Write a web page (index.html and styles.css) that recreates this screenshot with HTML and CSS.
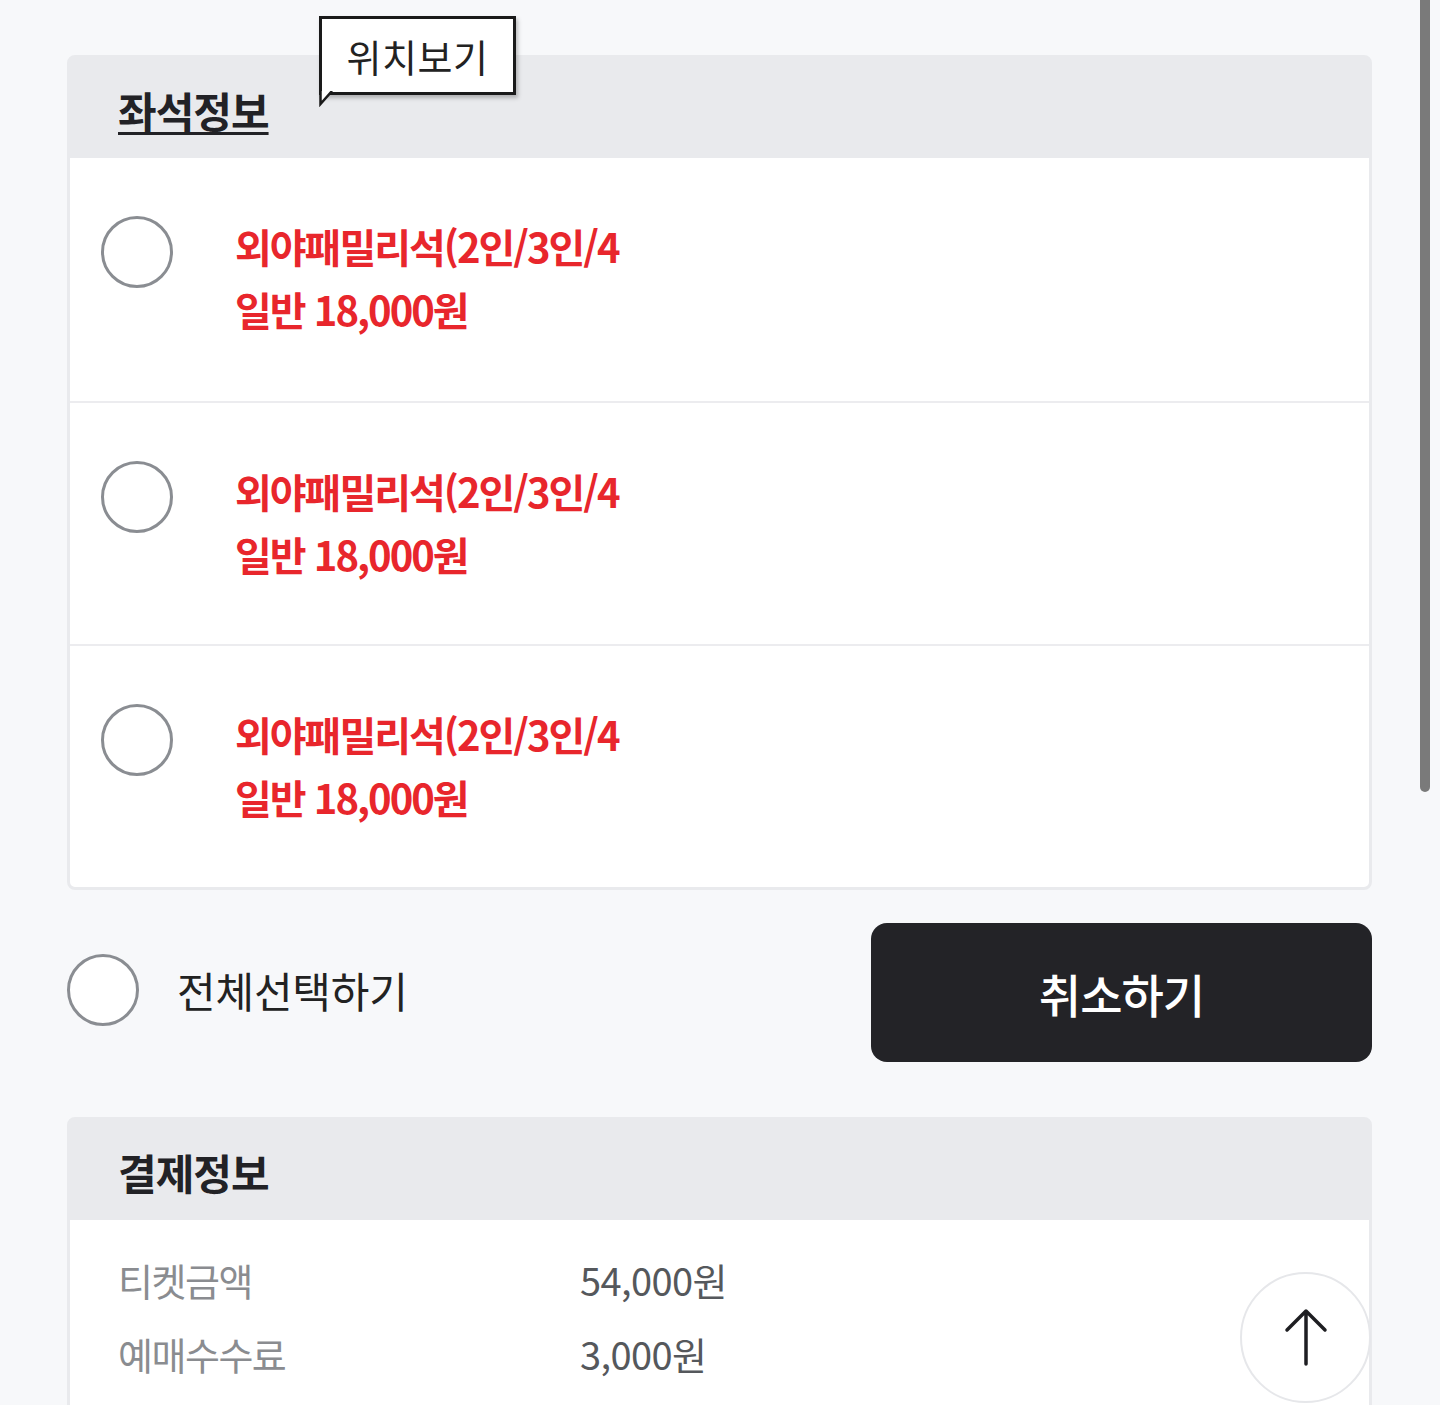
FILE: index.html
```html
<!DOCTYPE html>
<html lang="ko">
<head>
<meta charset="utf-8">
<title>좌석정보</title>
<link rel="stylesheet" href="styles.css">
</head>
<body>
<div class="page">
  <section class="card seat-card">
    <header class="card-head">
      <h2 class="card-title underline">좌석정보</h2>
      <div class="tooltip">
        <span>위치보기</span>
        <svg class="tail" width="16" height="16" viewBox="0 0 16 16"><path d="M1.5 0 V13 L13 0" fill="#fff" stroke="#1a1a1a" stroke-width="2.5"/></svg>
      </div>
    </header>
    <ul class="seat-list">
      <li class="seat-row">
        <span class="radio"></span>
        <div class="seat-text">
          <p class="seat-name">외야패밀리석(2인/3인/4</p>
          <p class="seat-price">일반 18,000원</p>
        </div>
      </li>
      <li class="seat-row">
        <span class="radio"></span>
        <div class="seat-text">
          <p class="seat-name">외야패밀리석(2인/3인/4</p>
          <p class="seat-price">일반 18,000원</p>
        </div>
      </li>
      <li class="seat-row">
        <span class="radio"></span>
        <div class="seat-text">
          <p class="seat-name">외야패밀리석(2인/3인/4</p>
          <p class="seat-price">일반 18,000원</p>
        </div>
      </li>
    </ul>
  </section>

  <div class="actions">
    <label class="select-all"><span class="radio"></span><span class="select-label">전체선택하기</span></label>
    <button class="cancel-btn">취소하기</button>
  </div>

  <section class="card pay-card">
    <header class="card-head">
      <h2 class="card-title">결제정보</h2>
    </header>
    <div class="pay-body">
      <div class="pay-row"><span class="pay-label">티켓금액</span><span class="pay-value">54,000원</span></div>
      <div class="pay-row"><span class="pay-label">예매수수료</span><span class="pay-value">3,000원</span></div>
    </div>
  </section>
</div>

<div class="scrollbar"></div>
<button class="to-top" aria-label="맨 위로">
  <svg width="44" height="60" viewBox="0 0 44 60"><path d="M22 56 V4 M3 22 L22 3 L41 22" fill="none" stroke="#1e1e22" stroke-width="3.5" stroke-linecap="round" stroke-linejoin="round"/></svg>
</button>
</body>
</html>
```

FILE: styles.css
```css
* { box-sizing: border-box; }
html, body { margin: 0; padding: 0; }
body {
  background: #f7f8fa;
  font-family: "Noto Sans CJK KR", "Noto Sans", sans-serif;
  color: #222;
  width: 1440px;
  height: 1405px;
  overflow: hidden;
}
.page {
  padding: 55px 68px 0 67px;
}
.card {
  background: #fff;
  border: 3px solid #e9eaed;
  border-radius: 8px;
}
.card-head {
  position: relative;
  background: #e9eaed;
  height: 100px;
  padding-left: 48px;
  display: flex;
  align-items: center;
}
.card-title {
  margin: 0;
  font-size: 42px;
  font-weight: 700;
  letter-spacing: -1px;
  color: #222226;
  line-height: 1;
  padding-top: 4px;
}
.card-title.underline {
  text-decoration: underline;
  text-decoration-thickness: 3px;
  text-underline-offset: 4px;
}
.tooltip {
  position: absolute;
  left: 249px;
  top: -42px;
  width: 197px;
  height: 79px;
  background: #fff;
  border: 3px solid #1a1a1a;
  box-shadow: 2px 3px 4px rgba(0,0,0,0.25);
  display: flex;
  align-items: center;
  justify-content: center;
  font-size: 38px;
  letter-spacing: 0.5px;
  color: #222;
}
.tooltip .tail {
  position: absolute;
  left: -3px;
  bottom: -15px;
}
.seat-list {
  list-style: none;
  margin: 0;
  padding: 0;
}
.seat-row {
  height: 243px;
  display: flex;
  align-items: flex-start;
  padding: 58px 0 0 31px;
}
.seat-row + .seat-row {
  border-top: 2px solid #ececef;
}
.radio {
  flex: none;
  display: inline-block;
  width: 72px;
  height: 72px;
  border: 3px solid #8a8d92;
  border-radius: 50%;
  background: #fff;
}
.seat-text {
  margin-left: 62px;
  margin-top: -1px;
}
.seat-text p {
  margin: 0;
  color: #e8262c;
  font-weight: 700;
  font-size: 40px;
  letter-spacing: -2px;
  line-height: 63px;
}
.actions {
  display: flex;
  align-items: center;
  justify-content: space-between;
  margin-top: 33px;
}
.select-all {
  display: flex;
  align-items: center;
  margin-bottom: 6px;
}
.select-label {
  margin-left: 38px;
  font-size: 42px;
  letter-spacing: -0.2px;
  color: #222;
}
.cancel-btn {
  width: 501px;
  height: 139px;
  border: 0;
  border-radius: 16px;
  background: #232327;
  color: #fff;
  font-family: inherit;
  font-size: 46px;
  font-weight: 500;
  letter-spacing: -1px;
}
.pay-card {
  margin-top: 55px;
}
.pay-body {
  padding: 22px 0 0 48px;
  height: 200px;
}
.pay-row {
  display: flex;
  height: 74px;
  align-items: center;
  font-size: 38px;
}
.pay-label {
  width: 462px;
  color: #8a8c90;
  letter-spacing: -1.5px;
}
.pay-value {
  color: #55585c;
  letter-spacing: -0.6px;
}
.scrollbar {
  position: fixed;
  left: 1420px;
  top: 0;
  width: 10px;
  height: 792px;
  background: #7a7a7a;
  border-radius: 0 0 5px 5px;
}
.to-top {
  position: fixed;
  left: 1240px;
  top: 1272px;
  width: 131px;
  height: 131px;
  border-radius: 50%;
  background: #fff;
  border: 2px solid #e6e7ea;
  display: flex;
  align-items: center;
  justify-content: center;
  padding: 0;
}
```
